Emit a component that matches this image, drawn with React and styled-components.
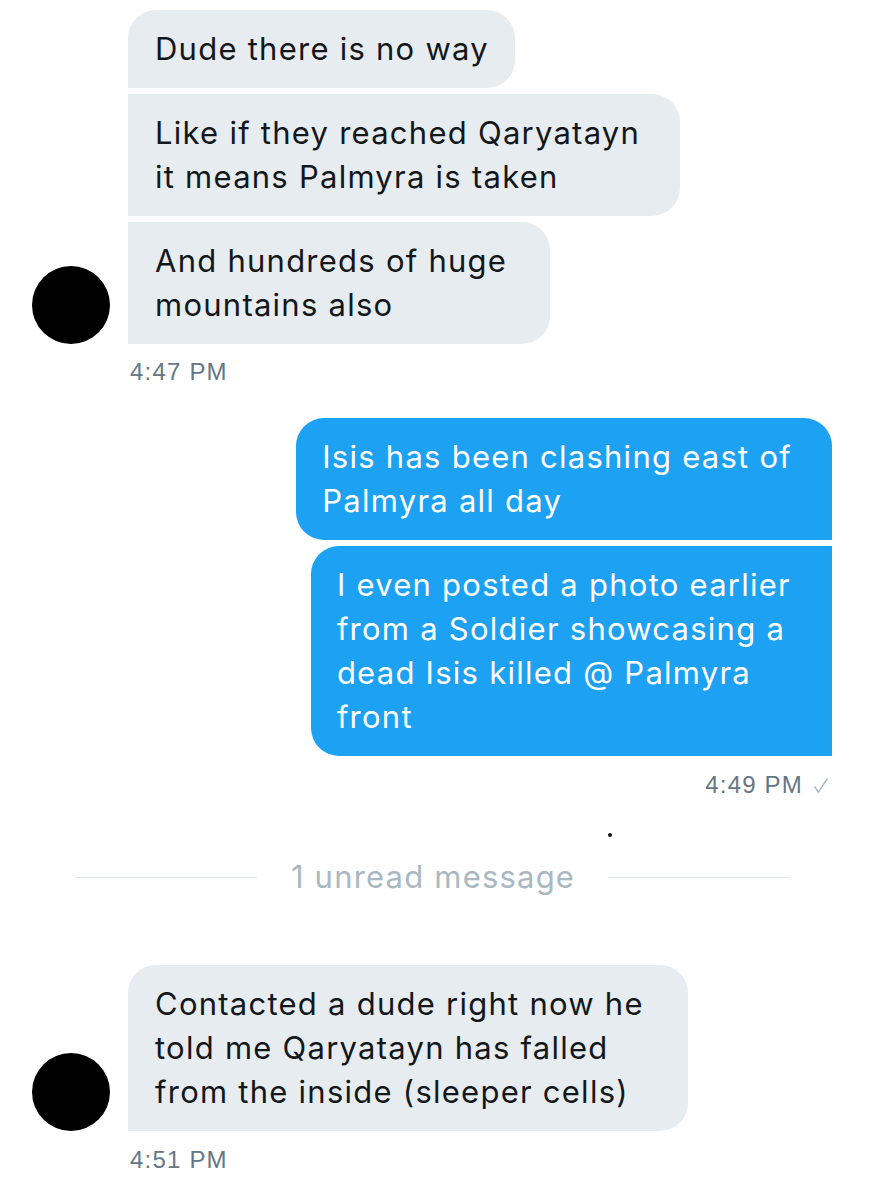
import React from 'react'
import styled, { createGlobalStyle } from 'styled-components'

const Global = createGlobalStyle`
  html, body {
    margin: 0;
    padding: 0;
    background: #fff;
  }
  body {
    font-family: Inter, "Liberation Sans", Arial, sans-serif;
    -webkit-font-smoothing: antialiased;
  }
`

const Thread = styled.div`
  width: 875px;
  height: 1200px;
  display: flex;
  flex-direction: column;
  padding-top: 10px;
  box-sizing: border-box;
  overflow: hidden;
`

const Received = styled.div`
  display: flex;
  align-items: flex-end;
  padding-left: 32px;
  gap: 18px;
  margin-top: ${p => p.$top || 0}px;
`

const Avatar = styled.div`
  width: 78px;
  height: 78px;
  border-radius: 50%;
  background: #000;
  flex-shrink: 0;
`

const Stack = styled.div`
  display: flex;
  flex-direction: column;
  align-items: ${p => (p.$mine ? 'flex-end' : 'flex-start')};
  gap: 6px;
`

const Sent = styled.div`
  display: flex;
  justify-content: flex-end;
  padding-right: 43px;
  margin-top: ${p => p.$top || 0}px;
`

const Bubble = styled.div`
  background: ${p => (p.$mine ? '#1da1f2' : '#e6ecf0')};
  color: ${p => (p.$mine ? '#ffffff' : '#14171a')};
  font-size: 31px;
  line-height: 44px;
  letter-spacing: 1.25px;
  padding: 17px ${p => p.$pr || 26}px 17px ${p => p.$pl || 27}px;
  white-space: pre-line;
  border-radius: ${p => p.$r};
`

const Time = styled.div`
  font-family: "Liberation Sans", Arial, sans-serif;
  font-size: 24px;
  line-height: 26px;
  letter-spacing: 1.2px;
  color: #657786;
  margin-top: ${p => p.$top}px;
  padding-left: ${p => (p.$mine ? 0 : 130)}px;
  padding-right: ${p => (p.$mine ? 46 : 0)}px;
  align-self: ${p => (p.$mine ? 'flex-end' : 'flex-start')};
  display: flex;
  align-items: center;
  gap: 10px;
`

const Check = styled.svg`
  width: 16px;
  height: 17px;
`

const Dot = styled.div`
  width: 4px;
  height: 4px;
  border-radius: 50%;
  background: #14171a;
  margin: 35px 0 0 608px;
`

const Divider = styled.div`
  display: flex;
  align-items: center;
  margin: 20px 85px 0 76px;
  gap: 34px;
`

const Rule = styled.div`
  flex: 1;
  height: 1px;
  background: #e1e8ed;
`

const DividerText = styled.div`
  font-size: 31px;
  line-height: 40px;
  letter-spacing: 1.2px;
  color: #aab8c2;
`

const R = 28

const App = () => (
  <>
    <Global />
    <Thread>
      <Received>
        <Avatar />
        <Stack>
          <Bubble $r={`${R}px ${R}px ${R}px 0`}>Dude there is no way</Bubble>
          <Bubble $pr={40} $r={`0 ${R}px ${R}px 0`}>{'Like if they reached Qaryatayn\nit means Palmyra is taken'}</Bubble>
          <Bubble $pr={43} $r={`0 ${R}px ${R}px 0`}>{'And hundreds of huge\nmountains also'}</Bubble>
        </Stack>
      </Received>
      <Time $top={15}>4:47 PM</Time>

      <Sent $top={33}>
        <Stack $mine>
          <Bubble $mine $pl={26} $pr={40} $r={`${R}px ${R}px 0 ${R}px`}>{'Isis has been clashing east of\nPalmyra all day'}</Bubble>
          <Bubble $mine $pl={26} $pr={41} $r={`${R}px 0 0 ${R}px`}>{'I even posted a photo earlier\nfrom a Soldier showcasing a\ndead Isis killed @ Palmyra\nfront'}</Bubble>
        </Stack>
      </Sent>
      <Time $mine $top={16}>
        4:49 PM
        <Check viewBox="0 0 16 17" fill="none" stroke="#aab8c2" strokeWidth="1.4">
          <path d="M1.5 9.5 L5.5 15 L14.5 1.5" />
        </Check>
      </Time>

      <Dot />
      <Divider>
        <Rule />
        <DividerText>1 unread message</DividerText>
        <Rule />
      </Divider>

      <Received $top={68}>
        <Avatar />
        <Stack>
          <Bubble $pr={44} $r={`${R}px ${R}px ${R}px 0`}>{'Contacted a dude right now he\ntold me Qaryatayn has falled\nfrom the inside (sleeper cells)'}</Bubble>
        </Stack>
      </Received>
      <Time $top={16}>4:51 PM</Time>
    </Thread>
  </>
)

export default App
